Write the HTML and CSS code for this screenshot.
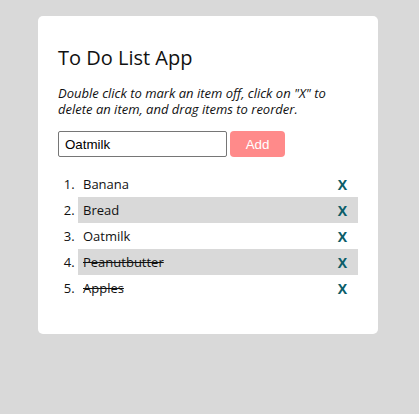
FILE: index.html
```html
<!DOCTYPE html>
<html>
<head>
<meta charset="utf-8">
<link rel="stylesheet" href="styles.css">
</head>
<body>
<div class="card">
  <h1 class="title">To Do List App</h1>
  <p class="help">Double click to mark an item off, click on "X" to delete an item, and drag items to reorder.</p>
  <form class="add-form">
    <input class="add-input" type="text" value="Oatmilk">
    <button class="add-btn" type="button">Add</button>
  </form>
  <ol class="list">
    <li class="item"><div class="row"><span class="item-text">Banana</span><span class="del">X</span></div></li>
    <li class="item alt"><div class="row"><span class="item-text">Bread</span><span class="del">X</span></div></li>
    <li class="item"><div class="row"><span class="item-text">Oatmilk</span><span class="del">X</span></div></li>
    <li class="item alt done"><div class="row"><span class="item-text">Peanutbutter</span><span class="del">X</span></div></li>
    <li class="item done"><div class="row"><span class="item-text">Apples</span><span class="del">X</span></div></li>
  </ol>
</div>
</body>
</html>
```
FILE: styles.css
```css
html, body {
  margin: 0;
  padding: 0;
  background: #d9d9d9;
}
body {
  padding: 16px 0 0 38px;
  font-family: "Open Sans", sans-serif;
  color: #111;
}
.card {
  width: 340px;
  height: 318px;
  box-sizing: border-box;
  background: #fff;
  border-radius: 5px;
  padding: 27px 20px 0 20px;
}
.title {
  margin: 0;
  font-size: 20px;
  font-weight: 400;
  line-height: 30px;
}
.help {
  margin: 12px 0 0 0;
  font-size: 13px;
  font-style: italic;
  line-height: 16px;
}
.add-form {
  display: flex;
  gap: 3px;
  margin-top: 14px;
}
.add-input {
  box-sizing: border-box;
  width: 169px;
  height: 26px;
  margin: 0;
  border: 1px solid #767676;
  border-radius: 2px;
  padding: 0 6px;
  font-family: "Liberation Sans", Arial, sans-serif;
  font-size: 13.33px;
  color: #000;
}
.add-btn {
  box-sizing: border-box;
  width: 55px;
  height: 26px;
  margin: 0;
  border: none;
  border-radius: 4px;
  background: #ff8a8a;
  color: #fff;
  font-family: "Liberation Sans", Arial, sans-serif;
  font-size: 13.33px;
}
.list {
  margin: 14px 0 0 0;
  padding: 0 0 0 20px;
  font-size: 13px;
}
.alt {
  background: #d9d9d9;
}
.row {
  display: flex;
  align-items: center;
  justify-content: space-between;
  height: 26px;
  padding: 0 11px 0 5px;
}
.done .item-text {
  text-decoration: line-through;
}
.del {
  font-weight: 700;
  color: #0b5d69;
  font-size: 14px;
}
```
